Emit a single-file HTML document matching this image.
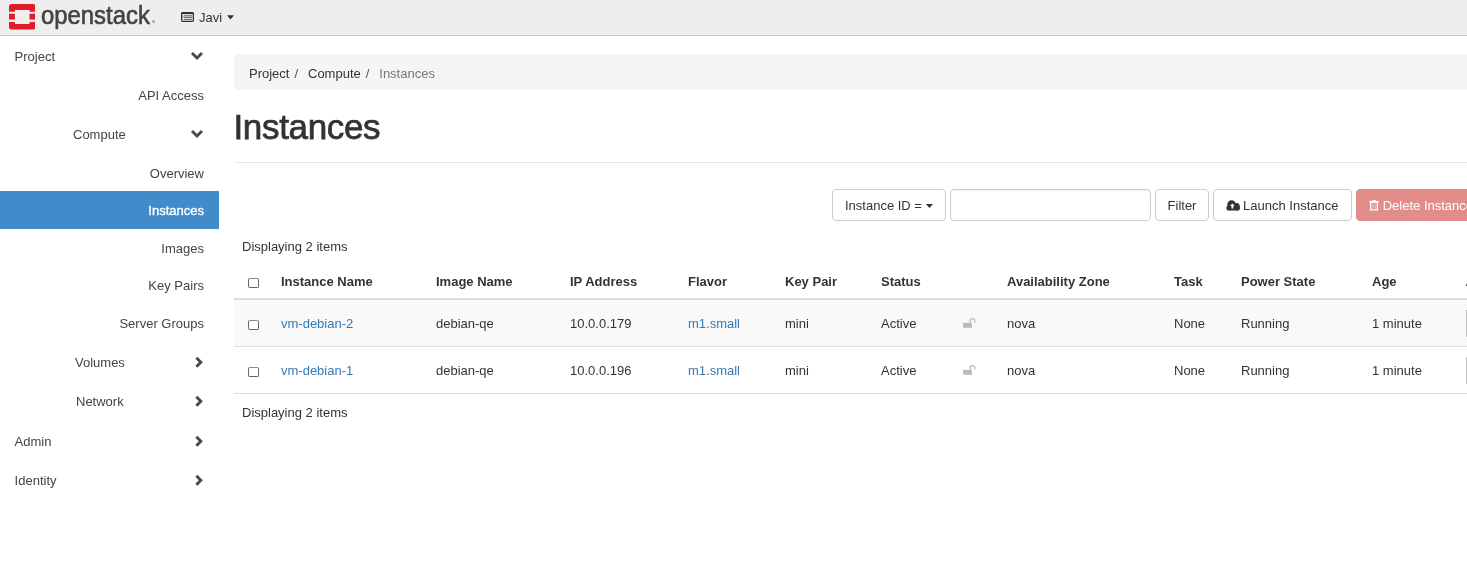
<!DOCTYPE html>
<html><head><meta charset="utf-8">
<style>
*{margin:0;padding:0;box-sizing:border-box}
html,body{width:1467px;height:561px;overflow:hidden;background:#fff;-webkit-font-smoothing:antialiased;font-family:"Liberation Sans",sans-serif;font-size:13px;color:#333}
.abs{position:absolute;white-space:nowrap}
#hdr{position:absolute;left:0;top:0;width:1467px;height:36px;background:#eee;border-bottom:1px solid #c8c8c8;box-shadow:inset 0 -1px 0 #f4f4f4, inset 0 -2px 0 #eaeaea}
.nav{position:absolute;white-space:nowrap;color:#444;font-size:13px;line-height:18px}
.chev{position:absolute;width:14px;height:14px}
#active{position:absolute;left:0;top:191px;width:219px;height:37.6px;background:#428bca}
#bc{position:absolute;left:234px;top:54px;width:1240px;height:36.3px;background:#f5f5f5;border-radius:4px}
.th{position:absolute;font-weight:bold;white-space:nowrap;line-height:17.5px}
.td{position:absolute;white-space:nowrap;line-height:17.5px}
a,.lnk{color:#337ab7;text-decoration:none}
.btn{position:absolute;top:189px;height:32px;border:1px solid #ccc;border-radius:4px;background:#fff;line-height:31.5px;white-space:nowrap;color:#333;font-size:13px}
.cb{position:absolute;width:11px;height:10px;border:1px solid #666;border-top-color:#8a8a8a;border-radius:2px;background:#fff}
</style></head><body><div style="position:absolute;left:0;top:0;width:1467px;height:561px;will-change:transform">
<div id="hdr"></div>
<!-- logo -->
<svg class="abs" style="left:9px;top:4.1px" width="26.4" height="26" viewBox="0 0 26 26" preserveAspectRatio="none">
  <path fill="#e11b28" d="M2.4 0 H23.6 Q26 0 26 2.4 V7.8 H20.2 V6.1 H5.8 V7.8 H0 V2.4 Q0 0 2.4 0Z"/>
  <rect fill="#e11b28" x="0" y="9.7" width="5.8" height="5.8"/>
  <rect fill="#e11b28" x="20.2" y="9.7" width="5.8" height="5.8"/>
  <path fill="#e11b28" d="M0 18 H5.8 V20 H20.2 V18 H26 V23.2 Q26 25.6 23.6 25.6 H2.4 Q0 25.6 0 23.2Z"/>
</svg>
<div class="abs" style="left:41px;top:0px;font-size:25px;color:#46423f;line-height:30px;-webkit-text-stroke:0.6px #46423f;transform-origin:0 0;transform:scaleX(0.955)">openstack</div>
<div class="abs" style="left:152px;top:20px;width:3px;height:3px;border-radius:50%;background:#aaa"></div>
<!-- Javi -->
<svg class="abs" style="left:181px;top:12px" width="13" height="10" viewBox="0 0 13 10"><rect x="0.65" y="0.65" width="11.7" height="8.7" rx="1" fill="none" stroke="#333" stroke-width="1.3"/><rect x="0.5" y="0.5" width="12" height="1.6" fill="#333"/><path d="M3 3.8H11M3 5.4H11M3 7.4H11" stroke="#555" stroke-width="0.9"/><path d="M2 3.4V6M2 7V7.8" stroke="#777" stroke-width="0.7"/></svg>
<div class="abs" style="left:199px;top:9px;font-size:13px;color:#333;line-height:18px">Javi</div>
<svg class="abs" style="left:227px;top:15px" width="7" height="5" viewBox="0 0 7 5"><path d="M0 0.2H7L3.5 4.6Z" fill="#333"/></svg>

<!-- sidebar -->
<div id="active"></div>
<div class="nav" style="left:14.6px;top:48px">Project</div>
<div class="nav" style="right:1263px;top:87px">API Access</div>
<div class="nav" style="left:73px;top:126px">Compute</div>
<div class="nav" style="right:1263px;top:165px">Overview</div>
<div class="nav" style="right:1263px;top:201.6px;color:#fff;-webkit-text-stroke:0.35px #fff">Instances</div>
<div class="nav" style="right:1263px;top:240px">Images</div>
<div class="nav" style="right:1263px;top:277px">Key Pairs</div>
<div class="nav" style="right:1263px;top:315px">Server Groups</div>
<div class="nav" style="left:75px;top:354px">Volumes</div>
<div class="nav" style="left:76px;top:393px">Network</div>
<div class="nav" style="left:14.6px;top:433px">Admin</div>
<div class="nav" style="left:14.6px;top:472px">Identity</div>
<!-- chevrons down -->
<svg class="chev" style="left:190px;top:49.4px" viewBox="0 0 14 14"><path d="M2 4 L7 9 L12 4" fill="none" stroke="#4a4a4a" stroke-width="2.9"/></svg>
<svg class="chev" style="left:190px;top:127.4px" viewBox="0 0 14 14"><path d="M2 4 L7 9 L12 4" fill="none" stroke="#4a4a4a" stroke-width="2.9"/></svg>
<!-- chevrons right -->
<svg class="chev" style="left:192px;top:355px" viewBox="0 0 14 14"><path d="M4.4 2.7 L8.8 7.2 L4.4 11.7" fill="none" stroke="#4a4a4a" stroke-width="2.9"/></svg>
<svg class="chev" style="left:192px;top:394px" viewBox="0 0 14 14"><path d="M4.4 2.7 L8.8 7.2 L4.4 11.7" fill="none" stroke="#4a4a4a" stroke-width="2.9"/></svg>
<svg class="chev" style="left:192px;top:434px" viewBox="0 0 14 14"><path d="M4.4 2.7 L8.8 7.2 L4.4 11.7" fill="none" stroke="#4a4a4a" stroke-width="2.9"/></svg>
<svg class="chev" style="left:192px;top:473px" viewBox="0 0 14 14"><path d="M4.4 2.7 L8.8 7.2 L4.4 11.7" fill="none" stroke="#4a4a4a" stroke-width="2.9"/></svg>

<!-- breadcrumb -->
<div id="bc"></div>
<div class="abs" style="left:249px;top:65px;line-height:17.5px;color:#333">Project<span style="color:#555;padding:0 6.3px 0 5px">/&nbsp;</span>Compute<span style="color:#555;padding:0 6.3px 0 5px">/&nbsp;</span><span style="color:#777">Instances</span></div>

<!-- title -->
<div class="abs" style="left:233.5px;top:106px;font-size:35px;line-height:42px;color:#333;-webkit-text-stroke:0.75px #333;letter-spacing:-0.35px">Instances</div>
<div class="abs" style="left:234px;top:162px;width:1240px;height:1px;background:#e8e8e8"></div>

<!-- toolbar -->
<div class="btn" style="left:832px;width:114px;padding-left:12px">Instance ID = <svg width="7" height="4" viewBox="0 0 7 4" style="vertical-align:2px"><path d="M0 0H7L3.5 4Z" fill="#333"/></svg></div>
<div class="btn" style="left:950px;width:201px;box-shadow:inset 0 1px 1px rgba(0,0,0,.075)"></div>
<div class="btn" style="left:1155px;width:54px;text-align:center">Filter</div>
<div class="btn" style="left:1213px;width:139px;padding-left:11.5px"><svg width="15" height="11" viewBox="0 0 15 11" style="vertical-align:-0.5px;margin-right:2.6px"><circle cx="5.6" cy="4.6" r="4.3" fill="#333"/><circle cx="10.6" cy="6" r="3" fill="#333"/><circle cx="3" cy="7.9" r="2.6" fill="#333"/><circle cx="11.4" cy="7.9" r="2.6" fill="#333"/><rect x="3" y="5.5" width="8.4" height="5" fill="#333"/><path d="M6.4 3.4 L8.7 6.1 H7.3 V8.6 H5.5 V6.1 H4.1Z" fill="#fff"/></svg>Launch Instance</div>
<div class="btn" style="left:1356px;width:140px;padding-left:12.3px;background:#e38d8b;border-color:#e38d8b;color:#fff"><svg width="10" height="12" viewBox="0 0 10 12" style="vertical-align:-0.6px;margin-right:3.4px"><path d="M3.2 0.9H6.8V2.1H3.2Z" fill="#fff"/><path d="M0.3 2H9.7V3.2H0.3Z" fill="#fff"/><path d="M1.6 3.4H8.4V10.9H1.6Z" fill="none" stroke="#fff" stroke-width="1.3"/><path d="M3.9 4.8V9.6M6.1 4.8V9.6" stroke="#fff" stroke-opacity="0.6" stroke-width="0.9"/></svg>Delete Instances</div>

<div class="td" style="left:242px;top:238px">Displaying 2 items</div>

<!-- table -->
<div class="abs" style="left:234px;top:298px;width:1240px;height:2px;background:#ddd"></div>
<div class="abs" style="left:234px;top:300px;width:1240px;height:46px;background:#f9f9f9"></div>
<div class="abs" style="left:234px;top:346px;width:1240px;height:1px;background:#ddd"></div>
<div class="abs" style="left:234px;top:393px;width:1240px;height:1px;background:#ddd"></div>

<div class="cb" style="left:248px;top:278px"></div>
<div class="th" style="left:281px;top:273px">Instance Name</div>
<div class="th" style="left:436px;top:273px">Image Name</div>
<div class="th" style="left:570px;top:273px">IP Address</div>
<div class="th" style="left:688px;top:273px">Flavor</div>
<div class="th" style="left:785px;top:273px">Key Pair</div>
<div class="th" style="left:881px;top:273px">Status</div>
<div class="th" style="left:1007px;top:273px">Availability Zone</div>
<div class="th" style="left:1174px;top:273px">Task</div>
<div class="th" style="left:1241px;top:273px">Power State</div>
<div class="th" style="left:1372px;top:273px">Age</div>
<div class="th" style="left:1465.5px;top:273px">Actions</div>

<div class="cb" style="left:248px;top:320px"></div>
<div class="td lnk" style="left:281px;top:315px">vm-debian-2</div>
<div class="td" style="left:436px;top:315px">debian-qe</div>
<div class="td" style="left:570px;top:315px">10.0.0.179</div>
<div class="td lnk" style="left:688px;top:315px">m1.small</div>
<div class="td" style="left:785px;top:315px">mini</div>
<div class="td" style="left:881px;top:315px">Active</div>
<div class="td" style="left:1007px;top:315px">nova</div>
<div class="td" style="left:1174px;top:315px">None</div>
<div class="td" style="left:1241px;top:315px">Running</div>
<div class="td" style="left:1372px;top:315px">1 minute</div>

<div class="cb" style="left:248px;top:367px"></div>
<div class="td lnk" style="left:281px;top:362px">vm-debian-1</div>
<div class="td" style="left:436px;top:362px">debian-qe</div>
<div class="td" style="left:570px;top:362px">10.0.0.196</div>
<div class="td lnk" style="left:688px;top:362px">m1.small</div>
<div class="td" style="left:785px;top:362px">mini</div>
<div class="td" style="left:881px;top:362px">Active</div>
<div class="td" style="left:1007px;top:362px">nova</div>
<div class="td" style="left:1174px;top:362px">None</div>
<div class="td" style="left:1241px;top:362px">Running</div>
<div class="td" style="left:1372px;top:362px">1 minute</div>

<!-- lock icons -->
<svg class="abs" style="left:963px;top:317px" width="13" height="12" viewBox="0 0 13 12"><rect x="0.1" y="5.9" width="8.8" height="4.9" fill="#bbb"/><path d="M7.1 6V4A2.35 2.35 0 0 1 11.8 4V5.6" fill="none" stroke="#bbb" stroke-width="1.25"/></svg>
<svg class="abs" style="left:963px;top:364px" width="13" height="12" viewBox="0 0 13 12"><rect x="0.1" y="5.9" width="8.8" height="4.9" fill="#bbb"/><path d="M7.1 6V4A2.35 2.35 0 0 1 11.8 4V5.6" fill="none" stroke="#bbb" stroke-width="1.25"/></svg>

<!-- action buttons edge -->
<div class="abs" style="left:1466px;top:309.5px;width:10px;height:27px;border-left:1px solid #bdbdbd;background:#fff"></div>
<div class="abs" style="left:1466px;top:356.5px;width:10px;height:27.5px;border-left:1px solid #bdbdbd;background:#fff"></div>

<div class="td" style="left:242px;top:404px">Displaying 2 items</div>
</div></body></html>
